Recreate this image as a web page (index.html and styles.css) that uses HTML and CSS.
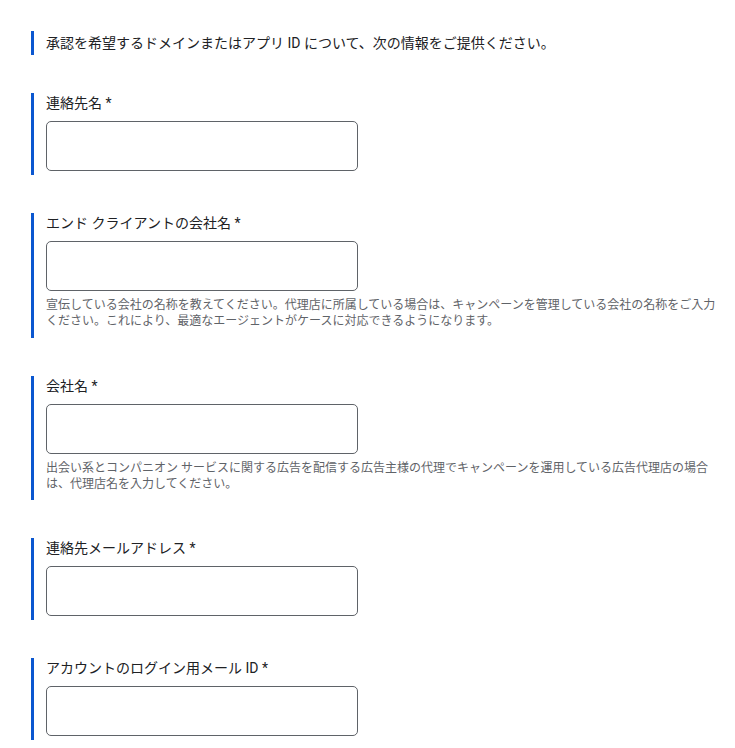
FILE: index.html
```html
<!DOCTYPE html>
<html lang="ja">
<head>
  <meta charset="UTF-8" />
  <meta name="viewport" content="width=device-width, initial-scale=1.0" />
  <title>ドメイン承認リクエスト</title>
  <link rel="stylesheet" href="styles.css">
</head>
<body>
  <form class="request-form">
    <p class="intro">承認を希望するドメインまたはアプリ ID について、次の情報をご提供ください。</p>

    <div class="field">
      <label for="contact-name">連絡先名 *</label>
      <input type="text" id="contact-name" name="contact-name" required />
    </div>

    <div class="field">
      <label for="client-company">エンド クライアントの会社名 *</label>
      <input type="text" id="client-company" name="client-company" required />
      <div class="help">宣伝している会社の名称を教えてください。代理店に所属している場合は、キャンペーンを管理している会社の名称をご入力ください。これにより、最適なエージェントがケースに対応できるようになります。</div>
    </div>

    <div class="field">
      <label for="company">会社名 *</label>
      <input type="text" id="company" name="company" required />
      <div class="help">出会い系とコンパニオン サービスに関する広告を配信する広告主様の代理でキャンペーンを運用している広告代理店の場合は、代理店名を入力してください。</div>
    </div>

    <div class="field">
      <label for="contact-email">連絡先メールアドレス *</label>
      <input type="email" id="contact-email" name="contact-email" required />
    </div>

    <div class="field">
      <label for="login-email">アカウントのログイン用メール ID *</label>
      <input type="email" id="login-email" name="login-email" required />
    </div>
  </form>
</body>
</html>
```

FILE: styles.css
```css
body {
  font-family: Roboto, 'Noto Sans CJK JP', sans-serif;
  background-color: #fff;
  margin: 0;
  padding: 0;
  color: #3c4043;
}

.request-form {
  display: flex;
  flex-direction: column;
  gap: 38px;
  padding: 31px 14px 0 31px;
}

.intro {
  margin: 0;
  padding-left: 12px;
  border-left: 3px solid #0b57d0;
  font-size: 14px;
  line-height: 24px;
  color: #202124;
}

.field {
  display: flex;
  flex-direction: column;
  align-items: flex-start;
  padding: 0 0 4px 12px;
  border-left: 3px solid #0b57d0;
}

.field label {
  font-size: 14px;
  line-height: 20px;
  margin-bottom: 8px;
  color: #202124;
}

.field input {
  width: 312px;
  height: 50px;
  border: 1px solid #5f6368;
  border-radius: 5px;
  box-sizing: border-box;
  padding: 0 12px;
  font-size: 14px;
}

.help {
  margin-top: 6px;
  margin-bottom: 4.5px;
  font-size: 12px;
  line-height: 16px;
  color: #5f6368;
}
```
